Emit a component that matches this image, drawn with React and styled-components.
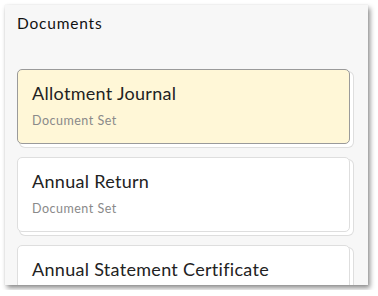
import React from 'react';
import styled, { createGlobalStyle } from 'styled-components';

const GlobalStyle = createGlobalStyle`
  html, body {
    margin: 0;
    padding: 0;
    background: #fff;
  }
  body {
    font-family: Lato, "Open Sans", "Liberation Sans", sans-serif;
  }
`;

const documents = [
  { title: 'Allotment Journal', kind: 'Document Set', selected: true },
  { title: 'Annual Return', kind: 'Document Set' },
  { title: 'Annual Statement Certificate', kind: 'Document Set' },
];

function App() {
  return (
    <>
      <GlobalStyle />
      <Panel>
        <Heading>Documents</Heading>
        <Divider />
        <List>
          {documents.map((doc, index) => (
            <Card key={index} selected={doc.selected}>
              <Title>{doc.title}</Title>
              <Kind>{doc.kind}</Kind>
            </Card>
          ))}
        </List>
      </Panel>
    </>
  );
}

const Panel = styled.div`
  margin: 5px;
  width: 363px;
  height: 280px;
  box-sizing: border-box;
  padding: 8px 15px 0 12px;
  background: #f7f7f7;
  box-shadow: 2px 3px 5px rgba(0, 0, 0, 0.45), 0 0 1px rgba(0, 0, 0, 0.12);
  overflow: hidden;
  display: flex;
  flex-direction: column;
`;

const Heading = styled.div`
  font-size: 15.5px;
  line-height: 20px;
  font-weight: 400;
  letter-spacing: 0.8px;
  color: #111;
  padding-bottom: 16px;
`;

const Divider = styled.div`
  height: 1px;
  background: #dcdcdc;
`;

const List = styled.div`
  display: flex;
  flex-direction: column;
  gap: 13px;
  padding-top: 20px;
`;

const Card = styled.div`
  width: 333px;
  height: 75px;
  flex-shrink: 0;
  box-sizing: border-box;
  padding: 12px 14px 0 14px;
  border-radius: 5px;
  border: 1px solid ${({ selected }) => (selected ? '#9a9a9a' : '#dedede')};
  background: ${({ selected }) => (selected ? '#fff7d7' : '#ffffff')};
  box-shadow: 3px 3px 0 0 #ffffff, 3px 3px 0 1px #dedede;
`;

const Title = styled.div`
  font-size: 18px;
  line-height: 22px;
  letter-spacing: 0.3px;
  color: #222;
`;

const Kind = styled.div`
  margin-top: 9px;
  font-size: 12.5px;
  line-height: 16px;
  letter-spacing: 0.5px;
  color: #8a8a8a;
`;

export default App;
